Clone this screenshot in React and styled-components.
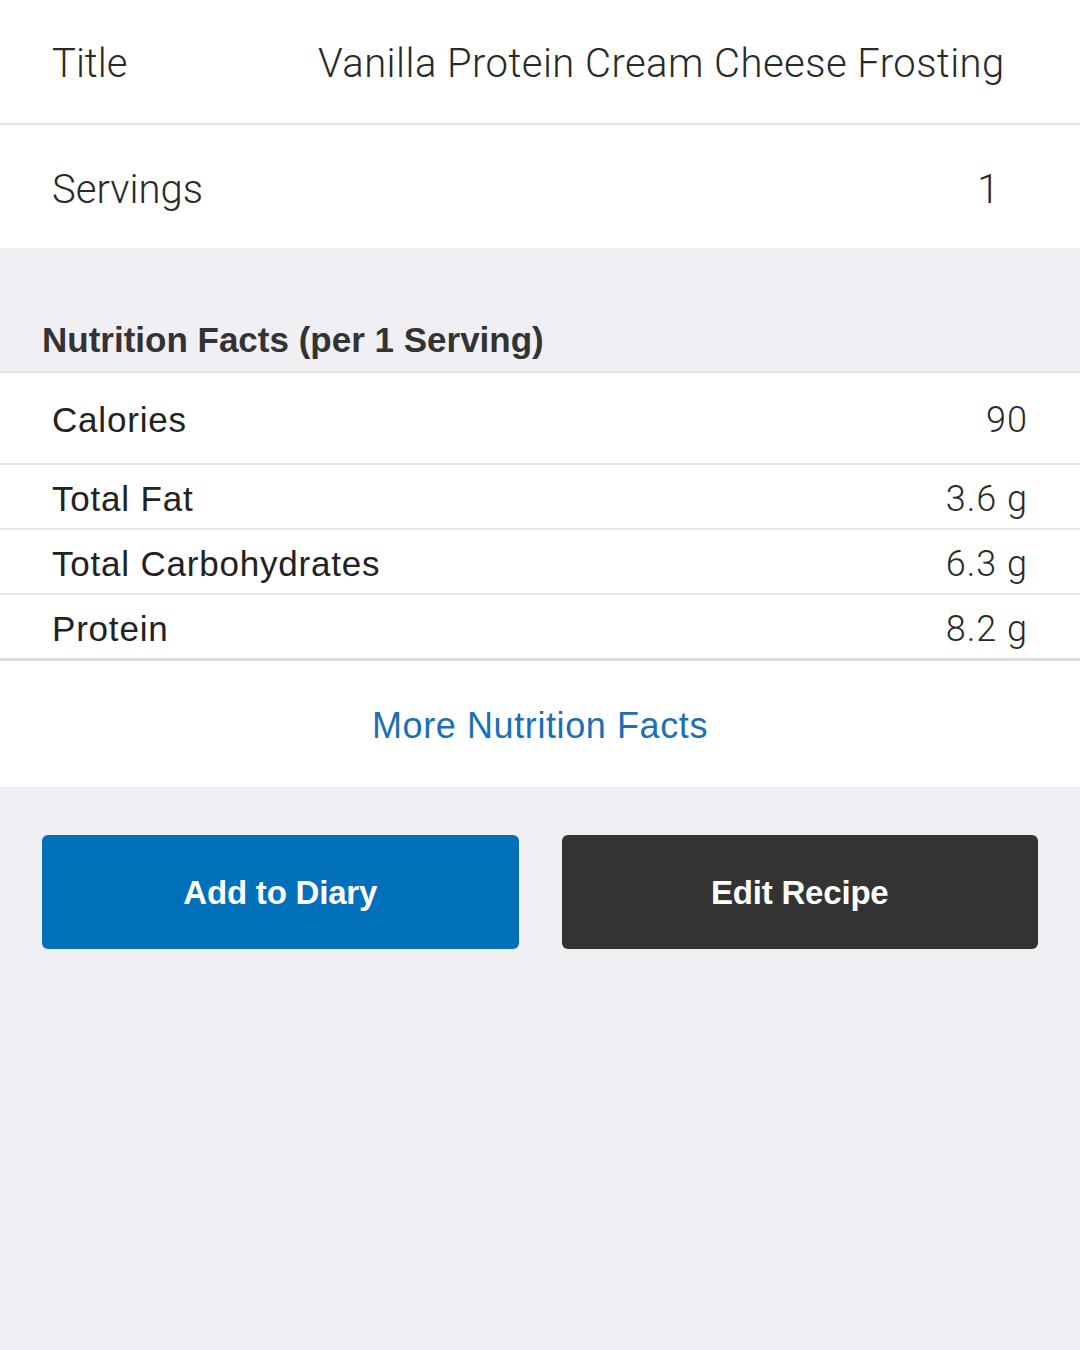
import React from "react";
import styled, { createGlobalStyle } from "styled-components";

const Global = createGlobalStyle`
  html, body { margin: 0; padding: 0; background: #efeff4; }
  body { font-family: "Liberation Sans", Arial, sans-serif; -webkit-font-smoothing: antialiased; }
`;

const Page = styled.div`
  width: 1080px;
  min-height: 1350px;
  background: #efeff4;
  color: #2b2b2b;
`;

const FormRow = styled.div`
  display: flex;
  align-items: center;
  height: ${(p) => (p.$last ? "123px" : "125px")};
  box-sizing: border-box;
  padding: ${(p) => (p.$last ? "5px 52px 0" : "3px 52px 0")};
  background: #fff;
  border-bottom: ${(p) => (p.$last ? "none" : "2px solid #e2e2e4")};
  font-family: Roboto, "Liberation Sans", sans-serif;
  font-weight: 300;
  font-size: 40px;
  color: #2a2a2a;
`;

const FormLabel = styled.span`
  width: 266px;
  flex: none;
`;

const FormValue = styled.span`
  flex: 1;
  text-align: ${(p) => p.$align || "left"};
  padding-right: ${(p) => p.$pr || "0"};
  letter-spacing: 0.45px;
`;

const SectionHeader = styled.div`
  display: flex;
  align-items: flex-end;
  height: 125px;
  padding: 0 42px 11px;
  box-sizing: border-box;
  font-size: 35px;
  font-weight: 700;
  color: #333;
  border-bottom: 2px solid #e2e2e4;
  letter-spacing: 0;
`;

const FactRow = styled.div`
  display: flex;
  align-items: center;
  justify-content: space-between;
  height: ${(p) => p.$h}px;
  box-sizing: border-box;
  padding: 4px 52px 0 52px;
  background: #fff;
  border-bottom: ${(p) => p.$border};
  font-size: 35px;
  letter-spacing: 0.8px;
  color: #222;
`;

const FactValue = styled.span`
  font-family: Roboto, "Liberation Sans", sans-serif;
  font-weight: 300;
  font-size: 36px;
  letter-spacing: 1px;
  color: #2a2a2a;
`;

const LinkRow = styled.div`
  display: flex;
  align-items: center;
  justify-content: center;
  height: 126px;
  box-sizing: border-box;
  padding-top: 4px;
  background: #fff;
  font-size: 36px;
  color: #1a70b6;
  letter-spacing: 0.6px;
`;

const Buttons = styled.div`
  display: grid;
  grid-template-columns: 1fr 1fr;
  gap: 43px;
  padding: 48px 42px 0;
`;

const Button = styled.button`
  height: 114px;
  border: none;
  border-radius: 6px;
  background: ${(p) => p.$bg};
  color: #fff;
  font-family: "Liberation Sans", Arial, sans-serif;
  font-size: 33px;
  font-weight: 700;
  letter-spacing: -0.2px;
  padding-top: 3px;
  cursor: pointer;
`;

const facts = [
  { label: "Calories", value: "90", h: 92, border: "2px solid #e6e6e8" },
  { label: "Total Fat", value: "3.6 g", h: 65, border: "2px solid #e6e6e8" },
  { label: "Total Carbohydrates", value: "6.3 g", h: 65, border: "2px solid #e6e6e8" },
  { label: "Protein", value: "8.2 g", h: 66, border: "3px solid #dcdcdf" },
];

export default function App() {
  return (
    <Page>
      <Global />
      <FormRow>
        <FormLabel>Title</FormLabel>
        <FormValue>Vanilla Protein Cream Cheese Frosting</FormValue>
      </FormRow>
      <FormRow $last>
        <FormLabel>Servings</FormLabel>
        <FormValue $align="right" $pr="28px">1</FormValue>
      </FormRow>
      <SectionHeader>Nutrition Facts (per 1 Serving)</SectionHeader>
      {facts.map((f) => (
        <FactRow key={f.label} $h={f.h} $border={f.border}>
          <span>{f.label}</span>
          <FactValue>{f.value}</FactValue>
        </FactRow>
      ))}
      <LinkRow>More Nutrition Facts</LinkRow>
      <Buttons>
        <Button $bg="#0170bb">Add to Diary</Button>
        <Button $bg="#333333">Edit Recipe</Button>
      </Buttons>
    </Page>
  );
}
